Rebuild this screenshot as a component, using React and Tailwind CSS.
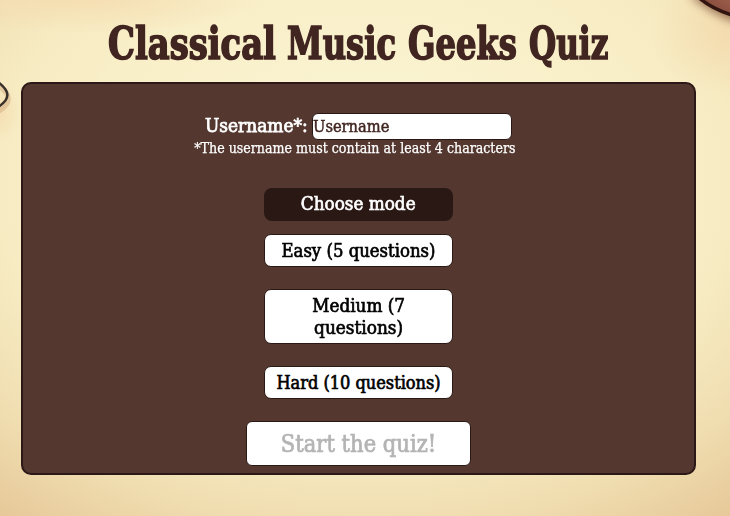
const serif = "font-['DejaVu_Serif_Condensed','DejaVu_Serif',serif] [font-stretch:condensed]";

function Word({ children, width, squeeze }) {
  return (
    <span className={`block ${width}`}>
      <span className={`block w-max origin-left ${squeeze}`}>{children}</span>
    </span>
  );
}

function Label({ children, className }) {
  return <span className={`block w-max whitespace-pre ${className}`}>{children}</span>;
}

function Backdrop() {
  return (
    <svg className="absolute inset-0 -z-10" width="730" height="516" viewBox="0 0 730 516" aria-hidden="true">
      <defs>
        <radialGradient id="paper" gradientUnits="userSpaceOnUse" cx="0" cy="0" r="1" gradientTransform="translate(365 180) scale(620 440)">
          <stop offset="0" stopColor="#fbf6d6" />
          <stop offset=".4" stopColor="#f9f0ca" />
          <stop offset=".6" stopColor="#f7ebc2" />
          <stop offset=".78" stopColor="#f0deb1" />
          <stop offset="1" stopColor="#e5c494" />
        </radialGradient>
        <radialGradient id="peach">
          <stop offset="0" stopColor="#f3cfa0" stopOpacity=".45" />
          <stop offset="1" stopColor="#f3cfa0" stopOpacity="0" />
        </radialGradient>
        <filter id="soft" x="-50%" y="-50%" width="200%" height="200%"><feGaussianBlur stdDeviation="5" /></filter>
        <linearGradient id="wood" x1="0" y1="1" x2="1" y2="0">
          <stop offset="0" stopColor="#351711" /><stop offset=".5" stopColor="#8c5041" /><stop offset="1" stopColor="#a0604d" />
        </linearGradient>
      </defs>
      <rect width="730" height="516" fill="url(#paper)" />
      <ellipse cx="95" cy="0" rx="170" ry="34" fill="url(#peach)" />
      <ellipse cx="725" cy="35" rx="75" ry="60" fill="url(#peach)" />
      <ellipse cx="0" cy="112" rx="20" ry="30" fill="url(#peach)" />
      <path d="M688 -6Q709 14 740 24V-6Z" fill="#6b3b27" opacity=".65" filter="url(#soft)" />
      <path d="M699 -3Q712 9 732 15V-3Z" fill="url(#wood)" />
      <path d="M698 -3Q712 9 732 15" fill="none" stroke="#321410" strokeWidth="3.5" />
      <path d="M-2 82C10 91 11 99 -2 107" fill="none" stroke="#c99d71" strokeWidth="5" opacity=".4" transform="translate(1 4)" />
      <path d="M-2 82C10 91 11 99 -2 107" fill="none" stroke="#39302a" strokeWidth="2.5" />
    </svg>
  );
}

const option = "flex w-[189px] items-center justify-center rounded-[7px] border border-[#2a1815] bg-white text-black text-[18px] leading-[22px] [-webkit-text-stroke:0.65px_black]";

export default function App() {
  return (
    <main className={`relative isolate h-[516px] w-[730px] overflow-hidden ${serif}`}>
      <Backdrop />
      <h1 className="flex h-[82px] pl-[108px] pt-[16px] text-[45px] font-bold leading-[56px] text-[#412521] [-webkit-text-stroke:1.6px_#412521]">
        <Word width="w-[179px]" squeeze="scale-x-[0.835]">Classical</Word>
        <Word width="w-[121px]" squeeze="scale-x-[0.795]">Music</Word>
        <Word width="w-[121px]" squeeze="scale-x-[0.795]">Geeks</Word>
        <Word width="w-[81px]" squeeze="scale-x-[0.77]">Quiz</Word>
      </h1>
      <section className="ml-[21px] flex h-[393px] w-[675px] flex-col items-center rounded-[10px] border-2 border-[#2c1816] bg-[#543830] pt-[29px]">
        <div className="flex h-[27px] w-[307px] items-center justify-between">
          <label htmlFor="username" className="w-[104px] pb-[2px] text-[18px] leading-[27px] text-white [-webkit-text-stroke:0.75px_white]">
            <Label className="origin-left scale-x-[1.05]">Username*:</Label>
          </label>
          <div id="username" className="flex h-[27px] w-[200px] items-center rounded-[6px] border border-[#2a1815] bg-white text-[16px] text-[#412521] [-webkit-text-stroke:0.45px_#412521]">
            <Label className="origin-left scale-x-[1.02]">Username</Label>
          </div>
        </div>
        <p className="mr-[8px] flex h-[18px] w-[323px] justify-center text-[14px] leading-[16px] text-white [-webkit-text-stroke:0.25px_white]">
          <Label className="shrink-0 scale-x-[1.005]">*The username must contain at least 4 characters</Label>
        </p>
        <div className="mt-[30px] flex h-[33px] w-[189px] items-center justify-center rounded-[8px] bg-[#2a1815] pb-[2px] text-[18px] leading-[22px] text-white [-webkit-text-stroke:0.65px_white]">
          <Label className="scale-x-[1.04]">Choose mode</Label>
        </div>
        <button className={`${option} mt-[13px] h-[33px]`}>
          <Label className="scale-x-[1.02]">Easy (5 questions)</Label>
        </button>
        <button className={`${option} mt-[22px] h-[55px] flex-col`}>
          <Label className="scale-x-[1.04]">Medium (7</Label>
          <Label className="scale-x-[1.045]">questions)</Label>
        </button>
        <button className={`${option} mt-[22px] h-[33px]`}>
          <Label className="scale-x-[1]">Hard (10 questions)</Label>
        </button>
        <button className="mt-[22px] flex h-[45px] w-[225px] items-center justify-center rounded-[6px] border border-[#2a1815] bg-white text-[24px] leading-[30px] text-[#b4b4b4] [-webkit-text-stroke:0.7px_#b4b4b4]">
          <Label className="scale-x-[0.977]">Start the quiz!</Label>
        </button>
      </section>
    </main>
  );
}
